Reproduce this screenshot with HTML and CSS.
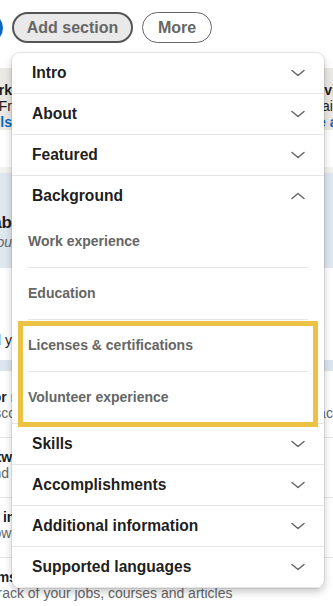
FILE: index.html
```html
<!DOCTYPE html>
<html lang="en">
<head>
    <meta charset="UTF-8">
    <meta name="viewport" content="width=device-width, initial-scale=1.0">
    <title>Profile - Add section</title>
    <link rel="stylesheet" href="styles.css">
</head>
<body>
    <div class="topbar">
        <span class="avatar"></span>
        <button class="pill pill-active">Add section</button>
        <button class="pill">More</button>
    </div>

    <!-- page content behind the menu, only the edges show -->
    <div class="band band-open">
        <div class="peek peek-left">
            <span class="bold">Open to work</span>
            <span>Data Analyst roles · Fr</span>
            <span class="link">See all details</span>
        </div>
        <div class="peek peek-right">
            <span class="bold">Providing services</span>
            <span>Email me</span>
            <span class="link">See all details</span>
        </div>
    </div>

    <div class="divider"></div>

    <div class="band band-suggested">
        <div class="peek peek-left">
            <span class="big">Profile lab</span>
            <span class="italic">Private to you</span>
        </div>
    </div>

    <div class="band band-plain">
        <div class="peek peek-left">
            <span>Tell people what you do and y</span>
        </div>
    </div>

    <div class="band band-strip"></div>

    <div class="resources">
        <div class="res-row first">
            <div class="res-title">Creator mode</div>
            <div class="res-desc">Get discovered, showcase content on your profile and get access to creator tools</div>
        </div>
        <div class="res-row">
            <div class="res-title">My network</div>
            <div class="res-desc">See and manage your connections and interests.</div>
        </div>
        <div class="res-row">
            <div class="res-title">Salary insights</div>
            <div class="res-desc">See how your salary compares to others in the industry.</div>
        </div>
        <div class="res-row">
            <div class="res-title">My items</div>
            <div class="res-desc">Keep track of your jobs, courses and articles</div>
        </div>
    </div>

    <div class="menu">
        <div class="menu-section">
            <div class="menu-head">Intro <svg class="chev" viewBox="0 0 14 8"><path d="M1 1.5 7 6.5 13 1.5"/></svg></div>
        </div>
        <div class="menu-section">
            <div class="menu-head">About <svg class="chev" viewBox="0 0 14 8"><path d="M1 1.5 7 6.5 13 1.5"/></svg></div>
        </div>
        <div class="menu-section">
            <div class="menu-head">Featured <svg class="chev" viewBox="0 0 14 8"><path d="M1 1.5 7 6.5 13 1.5"/></svg></div>
        </div>
        <div class="menu-section">
            <div class="menu-head">Background <svg class="chev" viewBox="0 0 14 8"><path d="M1 6.5 7 1.5 13 6.5"/></svg></div>
            <div class="menu-sub">
                <div class="sub-item">Work experience</div>
                <div class="sub-item">Education</div>
                <div class="sub-item">Licenses &amp; certifications</div>
                <div class="sub-item">Volunteer experience</div>
            </div>
        </div>
        <div class="menu-section">
            <div class="menu-head">Skills <svg class="chev" viewBox="0 0 14 8"><path d="M1 1.5 7 6.5 13 1.5"/></svg></div>
        </div>
        <div class="menu-section">
            <div class="menu-head">Accomplishments <svg class="chev" viewBox="0 0 14 8"><path d="M1 1.5 7 6.5 13 1.5"/></svg></div>
        </div>
        <div class="menu-section">
            <div class="menu-head">Additional information <svg class="chev" viewBox="0 0 14 8"><path d="M1 1.5 7 6.5 13 1.5"/></svg></div>
        </div>
        <div class="menu-section">
            <div class="menu-head">Supported languages <svg class="chev" viewBox="0 0 14 8"><path d="M1 1.5 7 6.5 13 1.5"/></svg></div>
        </div>

        <div class="highlight"></div>
    </div>
</body>
</html>
```

FILE: styles.css
```css
body {
    margin: 0;
    width: 333px;
    height: 606px;
    overflow: hidden;
    position: relative;
    background: #fff;
    font-family: "Liberation Sans", Arial, sans-serif;
    color: rgba(0, 0, 0, 0.9);
}
.topbar {
    display: flex;
    align-items: center;
    gap: 9px;
    padding-top: 12px;
    height: 31px;
    margin-bottom: 25px;
}
.avatar {
    width: 30px;
    height: 30px;
    margin-left: -27px;
    border-radius: 50%;
    background: #0a66c2;
    flex: none;
}
.pill {
    height: 31px;
    padding: 0;
    border: 1px solid #666;
    border-radius: 16px;
    background: #fff;
    color: #666;
    font-family: inherit;
    font-size: 16px;
    font-weight: 600;
    width: 70px;
}
.pill-active {
    width: 121px;
    border: 2px solid #555;
    background: #e9e9e9;
}
.band {
    display: flex;
    justify-content: space-between;
    font-size: 14px;
}
.peek {
    display: flex;
    flex-direction: column;
    overflow: hidden;
    white-space: nowrap;
}
.peek-left {
    width: 12px;
    align-items: flex-end;
}
.peek-right {
    width: 32px;
    align-items: flex-start;
}
.band-open {
    background: #ebe9e5;
    height: 48px;
    padding-top: 14px;
    line-height: 16px;
}
.bold {
    font-weight: 700;
}
.link {
    color: #0a66c2;
    font-weight: 700;
}
.divider {
    margin-top: 37px;
    height: 6px;
    background: #f3f2ef;
}
.band-suggested {
    background: #dfe7ef;
    height: 55px;
    padding-top: 40px;
}
.big {
    font-size: 17px;
    font-weight: 600;
    line-height: 20px;
}
.italic {
    font-style: italic;
    color: #666;
    line-height: 18px;
}
.band-plain {
    height: 29px;
    padding-top: 63px;
    line-height: 18px;
}
.band-strip {
    height: 11px;
    background: #dde6ee;
}
.resources {
    margin-left: -43px;
    width: 376px;
    padding-top: 7px;
    font-size: 14px;
    line-height: 16px;
}
.res-row {
    padding: 11px 0 16px;
    border-bottom: 1px solid #e6e6e6;
}
.res-title {
    font-weight: 700;
}
.res-desc {
    color: #666;
    white-space: nowrap;
    overflow: hidden;
}

/* dropdown menu */
.menu {
    position: absolute;
    left: 12px;
    top: 53px;
    width: 312px;
    background: #fff;
    border-radius: 8px;
    box-shadow: 0 0 0 1px rgba(0, 0, 0, 0.08), 0 4px 8px rgba(0, 0, 0, 0.22);
}
.menu-section {
    border-bottom: 1px solid #e6e6e6;
}
.menu-section:last-of-type {
    border-bottom: none;
}
.menu-head {
    display: flex;
    align-items: center;
    justify-content: space-between;
    height: 40px;
    padding: 0 19px 0 20px;
    font-size: 15.6px;
    font-weight: 600;
}
.chev {
    width: 14px;
    height: 8px;
    fill: none;
    stroke: #666;
    stroke-width: 1.5;
    stroke-linecap: round;
    stroke-linejoin: round;
}
.menu-sub {
    padding: 0 16px;
}
.sub-item {
    height: 51px;
    line-height: 51px;
    border-bottom: 1px solid #e6e6e6;
    font-size: 14px;
    font-weight: 600;
    color: #666;
}
.sub-item:last-child {
    border-bottom: none;
}
.highlight {
    position: absolute;
    left: 6px;
    top: 268px;
    width: 290px;
    height: 96px;
    border: 5px solid #ebc244;
}
```
